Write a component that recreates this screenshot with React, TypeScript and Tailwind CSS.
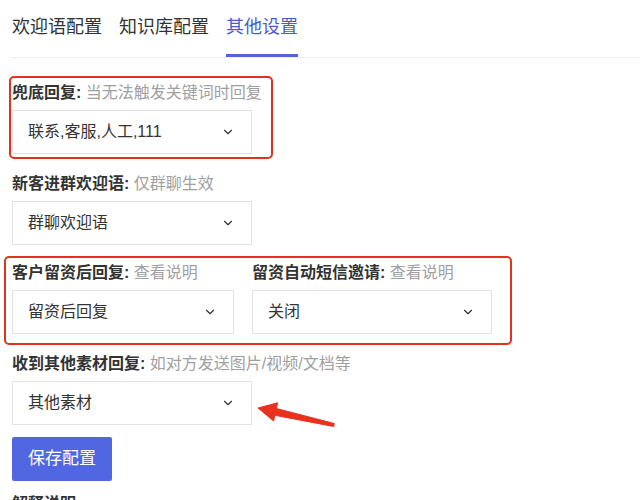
import React from 'react';
import { ChevronDown } from 'lucide-react';

const FONT = { fontFamily: '"Liberation Sans", "Noto Sans CJK SC", sans-serif' };

interface SelectBoxProps {
    value: string;
    width: string;
}

const SelectBox: React.FC<SelectBoxProps> = ({ value, width }) => (
    <div className={`mt-[6px] flex h-[44px] ${width} items-center justify-between border border-[#e3e3e3] bg-white pl-[15px] pr-[16px]`}>
        <span className="text-[16px] leading-[22px] text-[#333]">{value}</span>
        <ChevronDown size={14} strokeWidth={2} className="text-[#333]" />
    </div>
);

const Label: React.FC<{ title: string; hint: string }> = ({ title, hint }) => (
    <div className="whitespace-nowrap text-[16px] leading-[22px]">
        <span className="font-semibold text-[#333]">{title}: </span>
        <span className="text-[#a0a0a0]">{hint}</span>
    </div>
);

/**
 * Red annotation frame drawn over a group of fields
 */
const Highlight: React.FC<{ className: string }> = ({ className }) => (
    <div className={`pointer-events-none absolute rounded-[5px] border-2 border-[#e2311d] ${className}`} />
);

const Arrow: React.FC = () => (
    <svg
        className="pointer-events-none absolute left-[238px] top-[43px]"
        width="90"
        height="36"
        viewBox="0 0 90 36"
    >
        <polygon
            points="8,12 27.6,6.8 26.4,12.5 84.3,27.5 83.7,30.5 24.8,19.3 23.6,25"
            fill="#e8321f"
            stroke="#e8321f"
            strokeWidth="1"
            strokeLinejoin="round"
        />
    </svg>
);

export default function App() {
    const tabs = ['欢迎语配置', '知识库配置', '其他设置'];
    const active = 2;

    return (
        <div className="h-[500px] w-[640px] overflow-hidden bg-white" style={FONT}>
            {/* Tabs */}
            <div className="ml-[10px] flex gap-[17px] border-b border-[#eeeeee] pl-[2px]">
                {tabs.map((tab, i) => (
                    <div
                        key={tab}
                        className={`pt-[15px] pb-[15px] text-[18px] leading-[24px] ${i === active ? 'border-b-[3px] border-[#5563d6] text-[#4a5bd0]' : 'border-b-[3px] border-transparent text-[#333]'}`}
                    >
                        {tab}
                    </div>
                ))}
            </div>

            <div className="px-[12px] pt-[24px]">
                {/* 兜底回复 */}
                <div className="relative">
                    <Label title="兜底回复" hint="当无法触发关键词时回复" />
                    <SelectBox value="联系,客服,人工,111" width="w-[240px]" />
                    <Highlight className="-left-[3px] -top-[6px] h-[83px] w-[264px]" />
                </div>

                {/* 新客进群欢迎语 */}
                <div className="mt-[19px]">
                    <Label title="新客进群欢迎语" hint="仅群聊生效" />
                    <SelectBox value="群聊欢迎语" width="w-[240px]" />
                </div>

                {/* 留资 */}
                <div className="relative mt-[17px] flex gap-[18px]">
                    <div>
                        <Label title="客户留资后回复" hint="查看说明" />
                        <SelectBox value="留资后回复" width="w-[222px]" />
                    </div>
                    <div>
                        <Label title="留资自动短信邀请" hint="查看说明" />
                        <SelectBox value="关闭" width="w-[240px]" />
                    </div>
                    <Highlight className="-left-[8px] -top-[6px] h-[89px] w-[508px]" />
                </div>

                {/* 其他素材 */}
                <div className="relative mt-[19px]">
                    <Label title="收到其他素材回复" hint="如对方发送图片/视频/文档等" />
                    <SelectBox value="其他素材" width="w-[240px]" />
                    <Arrow />
                </div>

                <button className="mt-[12px] flex h-[44px] w-[100px] items-center justify-center rounded-[2px] bg-[#5167e1] text-[17px] text-white">
                    保存配置
                </button>

                <div className="mt-[12px] text-[16px] font-semibold leading-[22px] text-[#333]">解释说明:</div>
            </div>
        </div>
    );
}
